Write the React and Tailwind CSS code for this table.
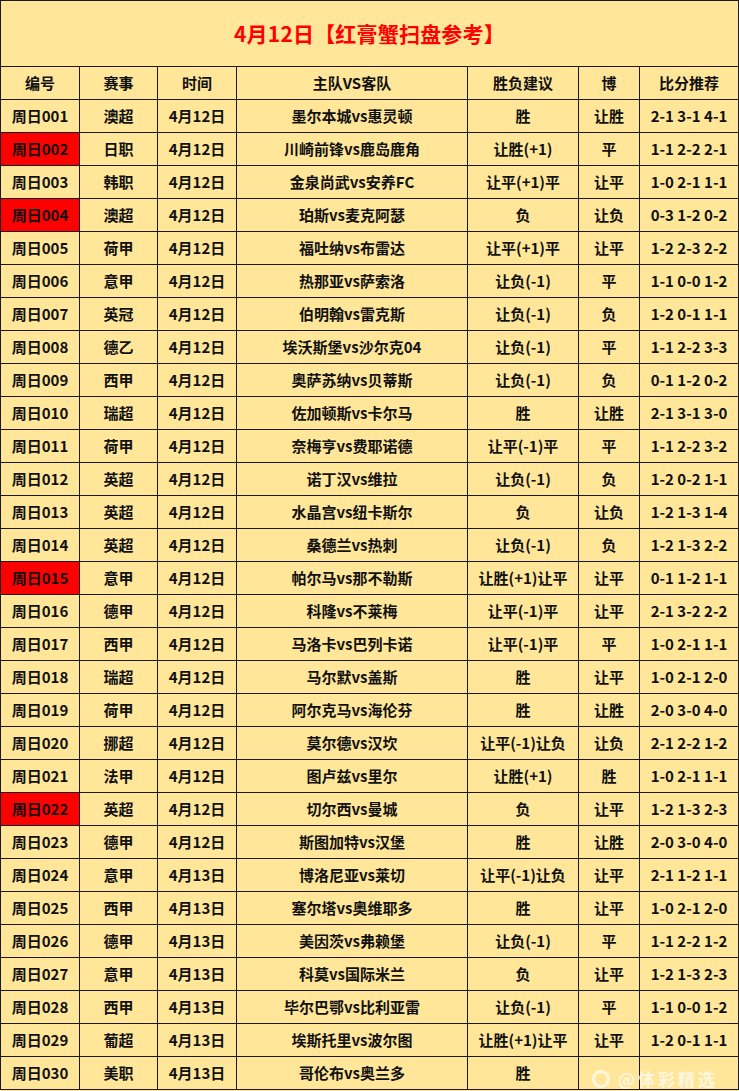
import React from "react";

const rows = [
  ["周日001", "澳超", "4月12日", "墨尔本城vs惠灵顿", "胜", "让胜", "2-1 3-1 4-1"],
  ["周日002", "日职", "4月12日", "川崎前锋vs鹿岛鹿角", "让胜(+1)", "平", "1-1 2-2 2-1", true],
  ["周日003", "韩职", "4月12日", "金泉尚武vs安养FC", "让平(+1)平", "让平", "1-0 2-1 1-1"],
  ["周日004", "澳超", "4月12日", "珀斯vs麦克阿瑟", "负", "让负", "0-3 1-2 0-2", true],
  ["周日005", "荷甲", "4月12日", "福吐纳vs布雷达", "让平(+1)平", "让平", "1-2 2-3 2-2"],
  ["周日006", "意甲", "4月12日", "热那亚vs萨索洛", "让负(-1)", "平", "1-1 0-0 1-2"],
  ["周日007", "英冠", "4月12日", "伯明翰vs雷克斯", "让负(-1)", "负", "1-2 0-1 1-1"],
  ["周日008", "德乙", "4月12日", "埃沃斯堡vs沙尔克04", "让负(-1)", "平", "1-1 2-2 3-3"],
  ["周日009", "西甲", "4月12日", "奥萨苏纳vs贝蒂斯", "让负(-1)", "负", "0-1 1-2 0-2"],
  ["周日010", "瑞超", "4月12日", "佐加顿斯vs卡尔马", "胜", "让胜", "2-1 3-1 3-0"],
  ["周日011", "荷甲", "4月12日", "奈梅亨vs费耶诺德", "让平(-1)平", "平", "1-1 2-2 3-2"],
  ["周日012", "英超", "4月12日", "诺丁汉vs维拉", "让负(-1)", "负", "1-2 0-2 1-1"],
  ["周日013", "英超", "4月12日", "水晶宫vs纽卡斯尔", "负", "让负", "1-2 1-3 1-4"],
  ["周日014", "英超", "4月12日", "桑德兰vs热刺", "让负(-1)", "负", "1-2 1-3 2-2"],
  ["周日015", "意甲", "4月12日", "帕尔马vs那不勒斯", "让胜(+1)让平", "让平", "0-1 1-2 1-1", true],
  ["周日016", "德甲", "4月12日", "科隆vs不莱梅", "让平(-1)平", "让平", "2-1 3-2 2-2"],
  ["周日017", "西甲", "4月12日", "马洛卡vs巴列卡诺", "让平(-1)平", "平", "1-0 2-1 1-1"],
  ["周日018", "瑞超", "4月12日", "马尔默vs盖斯", "胜", "让平", "1-0 2-1 2-0"],
  ["周日019", "荷甲", "4月12日", "阿尔克马vs海伦芬", "胜", "让胜", "2-0 3-0 4-0"],
  ["周日020", "挪超", "4月12日", "莫尔德vs汉坎", "让平(-1)让负", "让负", "2-1 2-2 1-2"],
  ["周日021", "法甲", "4月12日", "图卢兹vs里尔", "让胜(+1)", "胜", "1-0 2-1 1-1"],
  ["周日022", "英超", "4月12日", "切尔西vs曼城", "负", "让平", "1-2 1-3 2-3", true],
  ["周日023", "德甲", "4月12日", "斯图加特vs汉堡", "胜", "让胜", "2-0 3-0 4-0"],
  ["周日024", "意甲", "4月13日", "博洛尼亚vs莱切", "让平(-1)让负", "让平", "2-1 1-2 1-1"],
  ["周日025", "西甲", "4月13日", "塞尔塔vs奥维耶多", "胜", "让平", "1-0 2-1 2-0"],
  ["周日026", "德甲", "4月13日", "美因茨vs弗赖堡", "让负(-1)", "平", "1-1 2-2 1-2"],
  ["周日027", "意甲", "4月13日", "科莫vs国际米兰", "负", "让平", "1-2 1-3 2-3"],
  ["周日028", "西甲", "4月13日", "毕尔巴鄂vs比利亚雷", "让负(-1)", "平", "1-1 0-0 1-2"],
  ["周日029", "葡超", "4月13日", "埃斯托里vs波尔图", "让胜(+1)让平", "让平", "1-2 0-1 1-1"],
  ["周日030", "美职", "4月13日", "哥伦布vs奥兰多", "胜", "", ""],
];

const headers = ["编号", "赛事", "时间", "主队VS客队", "胜负建议", "博", "比分推荐"];

const cell = "bg-[#ffe699] flex items-center justify-center h-[32px] text-[15px] font-bold text-[#111] whitespace-nowrap";

export default function App() {
  return (
    <div
      className="w-[739px] h-[1091px] bg-[#ffe699] relative"
      style={{ fontFamily: '"Microsoft YaHei", "Noto Sans CJK SC", sans-serif' }}
    >
      <div className="bg-[#1a1a1a] p-px w-[739px]">
        <div className="bg-[#ffe699] h-[65px] flex items-center justify-center mb-px">
          <span className="text-[21px] font-bold text-[#ff0000] tracking-[0.2px]">4月12日【红膏蟹扫盘参考】</span>
        </div>
        <div className="grid grid-cols-[78px_77px_78px_230px_110px_60px_98px] gap-px">
          {headers.map((h) => (
            <div key={h} className={cell}>{h}</div>
          ))}
          {rows.map((r) => (
            <React.Fragment key={r[0]}>
              <div className={`${cell} ${r[7] ? "!bg-[#ff0000]" : ""}`}>{r[0]}</div>
              <div className={cell}>{r[1]}</div>
              <div className={cell}>{r[2]}</div>
              <div className={cell}>{r[3]}</div>
              <div className={cell}>{r[4]}</div>
              <div className={cell}>{r[5]}</div>
              <div className={cell}>{r[6]}</div>
            </React.Fragment>
          ))}
        </div>
      </div>
      {/* watermark */}
      <div className="absolute left-[592px] top-[1066px] flex items-center gap-2 text-[17px] font-bold text-white/70 tracking-[3px]">
        <span className="w-[18px] h-[18px] rounded-full border-[3px] border-white/70"></span>
        <span>@体彩精选</span>
      </div>
    </div>
  );
}
